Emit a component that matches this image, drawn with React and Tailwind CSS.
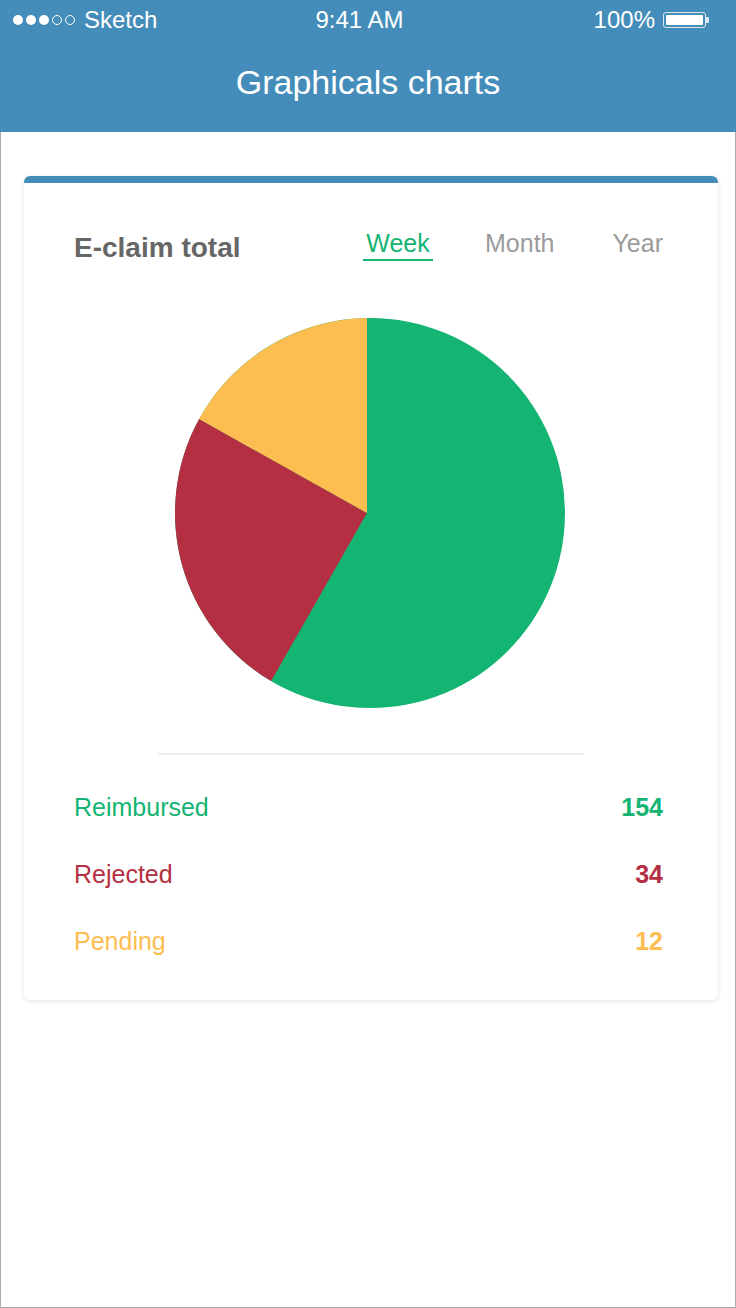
import React from 'react';

const legend = [
  { label: 'Reimbursed', value: 154, color: 'text-[#14b473]' },
  { label: 'Rejected', value: 34, color: 'text-[#b52f42]' },
  { label: 'Pending', value: 12, color: 'text-[#fdbd51]' },
];

function StatusBar() {
  return (
    <div className="flex items-center h-[40px] text-white text-[24px] pl-[13px] pr-[27px]">
      <div className="flex items-center gap-[3px]">
        <span className="w-[10px] h-[10px] rounded-full bg-white" />
        <span className="w-[10px] h-[10px] rounded-full bg-white" />
        <span className="w-[10px] h-[10px] rounded-full bg-white" />
        <span className="w-[10px] h-[10px] rounded-full border border-white" />
        <span className="w-[10px] h-[10px] rounded-full border border-white" />
      </div>
      <span className="ml-[9px] leading-none">Sketch</span>
      <span className="ml-[158px] leading-none">9:41 AM</span>
      <div className="ml-auto flex items-center">
        <span className="leading-none">100%</span>
        <div className="ml-[8px] w-[43px] h-[16px] border border-white/80 rounded-[3px] p-[2px]">
          <div className="w-full h-full bg-white rounded-[1px]" />
        </div>
        <div className="w-[3px] h-[6px] bg-white/80 rounded-r-[1px]" />
      </div>
    </div>
  );
}

function Pie() {
  return (
    <svg width="400" height="400" viewBox="0 0 400 400">
      <circle cx="200" cy="200" r="195" fill="#14b473" />
      <path d="M197,200 L101.2,368.1 A195,195 0 0 1 29.1,106.05 Z" fill="#b52f42" />
      <path d="M197,200 L29.1,106.05 A195,195 0 0 1 197,5.02 Z" fill="#febd50" />
    </svg>
  );
}

export default function App() {
  return (
    <div className="w-[736px] h-[1308px] flex flex-col bg-white" style={{ fontFamily: '"Liberation Sans", Arial, sans-serif' }}>
      {/* Header */}
      <div className="h-[132px] bg-[#448dba] shrink-0">
        <StatusBar />
        <h1 className="text-white text-[34px] leading-[40px] text-center mt-[22px]">Graphicals charts</h1>
      </div>

      <div className="flex-1 border-x border-b border-[#ababab]">
        {/* Card */}
        <div className="ml-[23px] mt-[44px] w-[694px] bg-white rounded-[6px] shadow-[0_1px_5px_rgba(0,0,0,0.12)] overflow-hidden">
          <div className="h-[7px] bg-[#448dba]" />

          <div className="flex justify-between items-start pl-[50px] pr-[55px] pt-[45px]">
            <span className="mt-[4px] text-[28px] leading-[32px] font-bold text-[#666666]">E-claim total</span>
            <div className="flex items-start text-[25px] leading-[30px]">
              <div className="flex flex-col items-center w-[70px]">
                <span className="text-[#14b473]">Week</span>
                <div className="mt-[1px] h-[2px] w-full bg-[#14b473]" />
              </div>
              <span className="ml-[52px] text-[#9b9b9b]">Month</span>
              <span className="ml-[58px] text-[#9b9b9b]">Year</span>
            </div>
          </div>

          <div className="ml-[146px] mt-[49px] w-[400px] h-[400px]">
            <Pie />
          </div>

          <div className="mx-auto mt-[40px] w-[426px] h-[2px] bg-[#eeeeee]" />

          <div className="flex flex-col gap-[37px] pl-[50px] pr-[55px] pt-[37px] pb-[44px]">
            {legend.map((item) => (
              <div key={item.label} className={`flex justify-between items-center text-[25px] leading-[30px] ${item.color}`}>
                <span>{item.label}</span>
                <span className="font-bold">{item.value}</span>
              </div>
            ))}
          </div>
        </div>
      </div>
    </div>
  );
}
